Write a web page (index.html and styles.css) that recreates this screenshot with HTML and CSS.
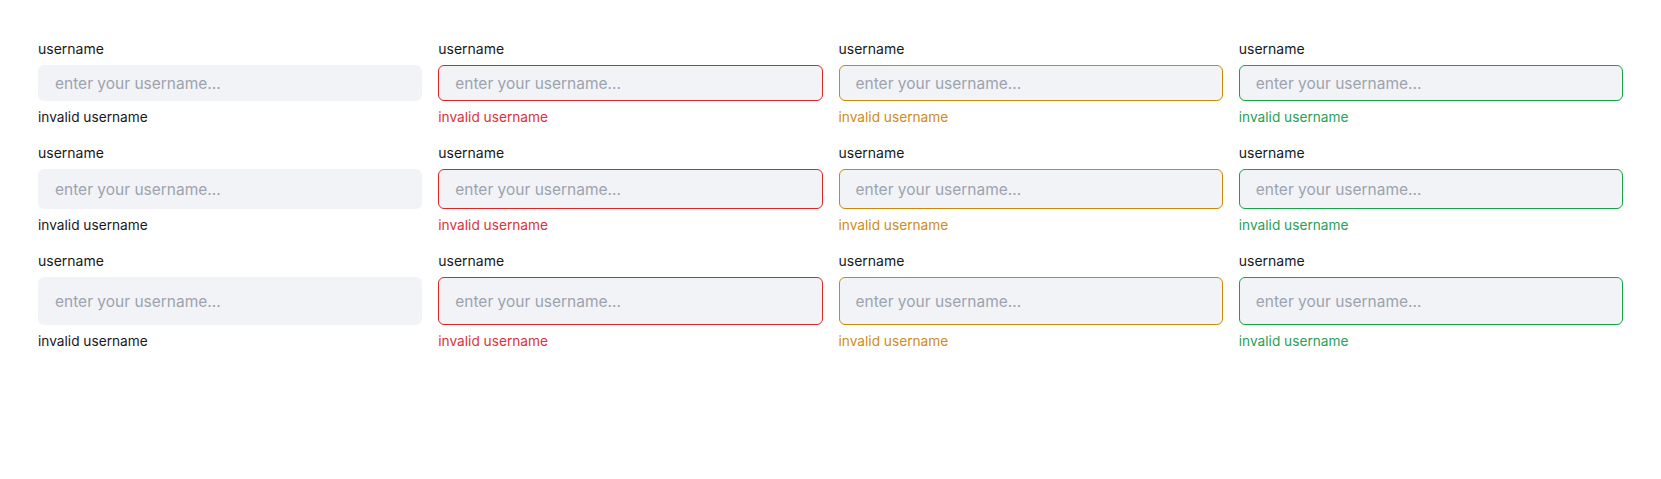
FILE: index.html
```html
<!DOCTYPE html>
<html lang="en">
<head>
<meta charset="utf-8">
<title>Inputs</title>
<link rel="stylesheet" href="styles.css">
</head>
<body>
<div class="page">
  <div class="grid">
    <div class="field"><label class="label">username</label><input class="input sm" placeholder="enter your username..."><span class="help">invalid username</span></div>
    <div class="field danger"><label class="label">username</label><input class="input sm" placeholder="enter your username..."><span class="help">invalid username</span></div>
    <div class="field warning"><label class="label">username</label><input class="input sm" placeholder="enter your username..."><span class="help">invalid username</span></div>
    <div class="field success"><label class="label">username</label><input class="input sm" placeholder="enter your username..."><span class="help">invalid username</span></div>

    <div class="field"><label class="label">username</label><input class="input md" placeholder="enter your username..."><span class="help">invalid username</span></div>
    <div class="field danger"><label class="label">username</label><input class="input md" placeholder="enter your username..."><span class="help">invalid username</span></div>
    <div class="field warning"><label class="label">username</label><input class="input md" placeholder="enter your username..."><span class="help">invalid username</span></div>
    <div class="field success"><label class="label">username</label><input class="input md" placeholder="enter your username..."><span class="help">invalid username</span></div>

    <div class="field"><label class="label">username</label><input class="input lg" placeholder="enter your username..."><span class="help">invalid username</span></div>
    <div class="field danger"><label class="label">username</label><input class="input lg" placeholder="enter your username..."><span class="help">invalid username</span></div>
    <div class="field warning"><label class="label">username</label><input class="input lg" placeholder="enter your username..."><span class="help">invalid username</span></div>
    <div class="field success"><label class="label">username</label><input class="input lg" placeholder="enter your username..."><span class="help">invalid username</span></div>
  </div>
</div>
</body>
</html>
```
FILE: styles.css
```css
html, body {
  margin: 0;
  padding: 0;
  background: #ffffff;
}
body {
  font-family: Inter, "Noto Sans", sans-serif;
  color: #18181b;
}
.page {
  padding: 39px 38px;
}
.grid {
  display: grid;
  grid-template-columns: repeat(4, 1fr);
  column-gap: 16px;
  row-gap: 16px;
}
.field {
  display: flex;
  flex-direction: column;
  min-width: 0;
}
.label {
  font-size: 14px;
  line-height: 20px;
  margin-bottom: 6px;
  color: #18181b;
}
.input {
  box-sizing: border-box;
  width: 100%;
  border: 1px solid transparent;
  border-radius: 6px;
  background: #f2f3f6;
  font-family: Inter, "Noto Sans", sans-serif;
  font-size: 15.5px;
  color: #18181b;
  padding: 0 16px;
  outline: none;
  margin: 0;
}
.input::placeholder {
  color: #9ca3af;
}
.input.sm { height: 36px; }
.input.md { height: 40px; }
.input.lg { height: 48px; }
.help {
  font-size: 13.7px;
  line-height: 20px;
  margin-top: 6px;
  color: #18181b;
}
.danger .input { border-color: #dc2626; }
.danger .help { color: #d8333a; }
.warning .input { border-color: #ca8a04; }
.warning .help { color: #cc8d20; }
.success .input { border-color: #16a34a; }
.success .help { color: #2b9e58; }
```
